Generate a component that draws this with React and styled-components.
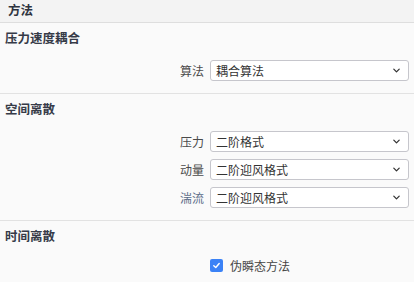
import React from "react";
import styled, { createGlobalStyle } from "styled-components";

const GlobalStyle = createGlobalStyle`
  html, body {
    margin: 0;
    padding: 0;
    background: #fafafa;
    font-family: "Noto Sans CJK SC", "Noto Sans", sans-serif;
  }
`;

// ---------------- styled components ----------------
const Panel = styled.div`
  width: 414px;
  height: 282px;
  overflow: hidden;
  background: #fafafa;
  color: #333;
`;
const Header = styled.div`
  height: 22px;
  line-height: 20px;
  padding: 0 8px;
  background: #f3f3f3;
  border-bottom: 1px solid #dedede;
  font-size: 12.5px;
  font-weight: 700;
  color: #2f3440;
`;
const Section = styled.div`
  padding: 6px 5px 12px 5px;
  border-bottom: ${(p) => (p.last ? "none" : "1px solid #e2e2e2")};
`;
const SectionTitle = styled.div`
  font-size: 12.5px;
  line-height: 18px;
  font-weight: 700;
  color: #363b48;
  margin-bottom: ${(p) => p.gap || 14}px;
`;
const Rows = styled.div`
  display: flex;
  flex-direction: column;
  gap: 7px;
`;
const Row = styled.div`
  display: flex;
  justify-content: flex-end;
  align-items: center;
  gap: 6px;
`;
const Label = styled.span`
  font-size: 12px;
  color: ${(p) => (p.hint ? "#5b6c88" : "#4a4a4a")};
`;
const Select = styled.div`
  box-sizing: border-box;
  width: 199px;
  height: 21px;
  background: #fff;
  border: 1px solid #c6c6cc;
  border-radius: 3px;
  display: flex;
  align-items: center;
  justify-content: space-between;
  padding: 0 7px 0 5px;
  font-size: 12px;
  color: #333;
`;
const Chevron = styled.svg`
  width: 9px;
  height: 9px;
  color: #333;
`;
const CheckRow = styled.div`
  display: flex;
  align-items: center;
  gap: 7px;
  padding-left: 205px;
`;
const CheckBox = styled.span`
  width: 13px;
  height: 13px;
  border-radius: 2px;
  background: #3b82f6;
  display: flex;
  align-items: center;
  justify-content: center;
`;
const CheckLabel = styled.span`
  font-size: 12px;
  color: #444;
`;

const SelectBox = ({ value }) => (
  <Select>
    <span>{value}</span>
    <Chevron viewBox="0 0 10 10" fill="none">
      <path d="M2 3.5 L5 6.5 L8 3.5" stroke="currentColor" strokeWidth="1.4" strokeLinecap="round" strokeLinejoin="round" />
    </Chevron>
  </Select>
);

// ---------------- component ----------------
const App = () => (
  <>
    <GlobalStyle />
    <Panel>
      <Header>方法</Header>
      <Section>
        <SectionTitle gap={13}>压力速度耦合</SectionTitle>
        <Rows>
          <Row>
            <Label>算法</Label>
            <SelectBox value="耦合算法" />
          </Row>
        </Rows>
      </Section>
      <Section>
        <SectionTitle gap={13}>空间离散</SectionTitle>
        <Rows>
          <Row>
            <Label>压力</Label>
            <SelectBox value="二阶格式" />
          </Row>
          <Row>
            <Label>动量</Label>
            <SelectBox value="二阶迎风格式" />
          </Row>
          <Row>
            <Label hint>湍流</Label>
            <SelectBox value="二阶迎风格式" />
          </Row>
        </Rows>
      </Section>
      <Section last>
        <SectionTitle gap={12}>时间离散</SectionTitle>
        <CheckRow>
          <CheckBox>
            <svg width="9" height="9" viewBox="0 0 10 10" fill="none">
              <path d="M2 5.2 L4.2 7.2 L8 2.8" stroke="#fff" strokeWidth="1.6" strokeLinecap="round" strokeLinejoin="round" />
            </svg>
          </CheckBox>
          <CheckLabel>伪瞬态方法</CheckLabel>
        </CheckRow>
      </Section>
    </Panel>
  </>
);

export default App;
